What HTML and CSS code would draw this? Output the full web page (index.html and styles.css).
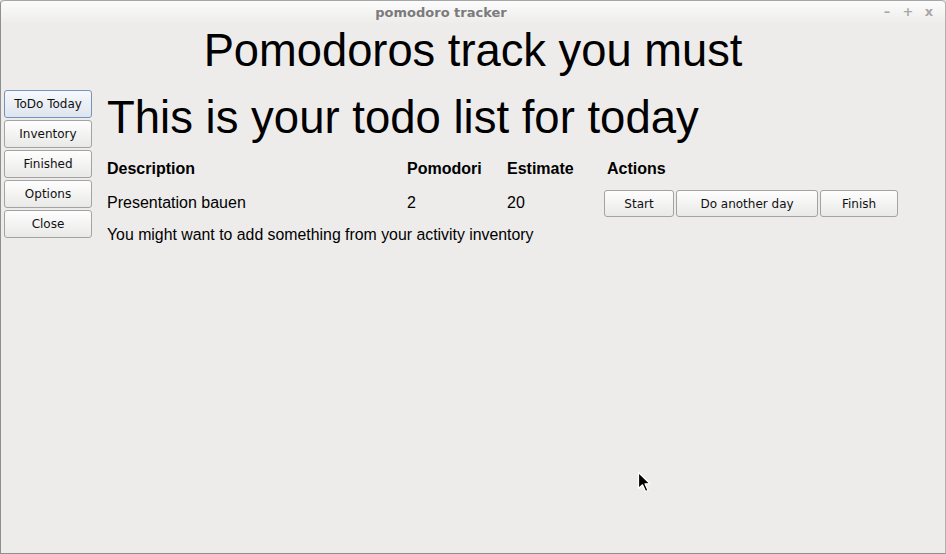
FILE: index.html
```html
<!DOCTYPE html>
<html>
<head>
<meta charset="utf-8">
<title>pomodoro tracker</title>
<link rel="stylesheet" href="styles.css">
</head>
<body>
<div class="window">
  <div class="titlebar">
    <span class="title">pomodoro tracker</span>
    <div class="wm-controls">
      <span class="wm">&#8211;</span>
      <span class="wm">+</span>
      <span class="wm">x</span>
    </div>
  </div>
  <h1 class="headline">Pomodoros track you must</h1>
  <div class="main">
    <nav class="sidebar">
      <button class="btn nav active">ToDo Today</button>
      <button class="btn nav">Inventory</button>
      <button class="btn nav">Finished</button>
      <button class="btn nav">Options</button>
      <button class="btn nav">Close</button>
    </nav>
    <section class="content">
      <h2 class="subhead">This is your todo list for today</h2>
      <div class="table">
        <div class="th">Description</div>
        <div class="th">Pomodori</div>
        <div class="th">Estimate</div>
        <div class="th actions-head">Actions</div>
        <div class="td">Presentation bauen</div>
        <div class="td">2</div>
        <div class="td">20</div>
        <div class="td actions">
          <button class="btn act start">Start</button>
          <button class="btn act another">Do another day</button>
          <button class="btn act finish">Finish</button>
        </div>
      </div>
      <p class="note">You might want to add something from your activity inventory</p>
    </section>
  </div>
  <svg class="cursor" width="16" height="24" viewBox="0 0 16 24">
    <path d="M1.5 1.5 L1.5 17.5 L5.5 13.8 L8.6 20.5 L11 19.4 L8 12.8 L13 12.8 Z" fill="#000" stroke="#fff" stroke-width="1.2" stroke-linejoin="round"/>
  </svg>
</div>
</body>
</html>
```

FILE: styles.css
```css
* { box-sizing: border-box; }
html, body {
  margin: 0;
  padding: 0;
  width: 946px;
  height: 554px;
  overflow: hidden;
  background: #edeceb;
}
.window {
  position: relative;
  width: 946px;
  height: 554px;
  background: #edeceb;
  border-left: 1px solid #8f8f8f;
  border-right: 1px solid #b0b0b0;
  border-bottom: 1px solid #8f8f8f;
  border-top-left-radius: 4px;
  border-top-right-radius: 4px;
  font-family: "Liberation Sans", Arial, sans-serif;
  color: #000;
}
.titlebar {
  position: relative;
  height: 24px;
  display: flex;
  align-items: center;
  justify-content: center;
  background: linear-gradient(#fcfcfc, #edeceb);
  border-top: 1px solid #a6a6a6;
  border-top-left-radius: 4px;
  border-top-right-radius: 4px;
}
.title {
  font-family: "DejaVu Sans", sans-serif;
  font-weight: bold;
  font-size: 13px;
  color: #7b7b7b;
  margin-right: 64px;
}
.wm-controls {
  position: absolute;
  right: 10px;
  top: 3px;
  display: flex;
  gap: 9px;
}
.wm {
  font-family: "DejaVu Sans", sans-serif;
  font-size: 13px;
  font-weight: bold;
  color: #a8a8a8;
  width: 12px;
  text-align: center;
}
.headline {
  margin: 1px 0 0;
  font-weight: normal;
  font-size: 45.3px;
  line-height: 52px;
  text-align: center;
}
.main {
  display: flex;
  align-items: flex-start;
}
.sidebar {
  width: 88px;
  margin: 13px 0 0 3px;
  display: flex;
  flex-direction: column;
  gap: 2px;
}
.btn {
  font-family: "DejaVu Sans", sans-serif;
  font-size: 12px;
  color: #111;
  background: linear-gradient(#fefefe, #e9e9e8);
  border: 1px solid #a3a3a3;
  border-radius: 3px;
  padding: 0;
  margin: 0;
  height: 28px;
}
.nav { width: 88px; }
.nav.active {
  border-color: #7693bb;
  background: linear-gradient(#f6f9fc, #dfe5ee);
}
.content {
  margin-left: 15px;
  padding-top: 15px;
}
.subhead {
  margin: 0;
  font-weight: normal;
  font-size: 45.5px;
  line-height: 52px;
}
.table {
  display: grid;
  grid-template-columns: 300px 100px 97px auto;
  margin-top: 16px;
  align-items: center;
}
.th {
  font-weight: bold;
  font-size: 16px;
  line-height: 18px;
  height: 30px;
}
.actions-head { padding-left: 3px; }
.td {
  font-size: 16px;
  line-height: 18px;
  padding-bottom: 2px;
}
.actions {
  display: flex;
  gap: 2px;
  height: 27px;
  padding-bottom: 0;
}
.act { height: 27px; }
.start { width: 70px; }
.another { width: 142px; }
.finish { width: 78px; }
.note {
  margin: 9px 0 0;
  font-size: 15.85px;
  line-height: 18px;
}
.cursor {
  position: absolute;
  left: 636px;
  top: 471px;
}
```
